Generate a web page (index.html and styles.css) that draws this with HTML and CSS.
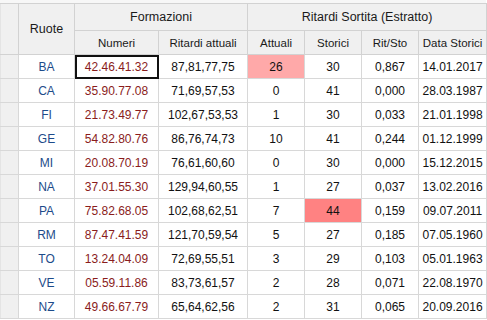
FILE: index.html
```html
<!DOCTYPE html>
<html lang="it">
<head>
<meta charset="utf-8">
<title>Ritardi</title>
<link rel="stylesheet" href="styles.css">
</head>
<body>
<div class="wrap">
  <table class="grid">
    <colgroup>
      <col class="c-rh"><col class="c-ruote"><col class="c-num"><col class="c-rit">
      <col class="c-att"><col class="c-sto"><col class="c-rs"><col class="c-data">
    </colgroup>
    <thead>
      <tr class="h1">
        <th class="rh" rowspan="2"></th>
        <th rowspan="2" class="big">Ruote</th>
        <th colspan="2" class="big">Formazioni</th>
        <th colspan="4" class="big grp">Ritardi Sortita (Estratto)</th>
      </tr>
      <tr class="h2">
        <th>Numeri</th>
        <th>Ritardi attuali</th>
        <th class="grp">Attuali</th>
        <th>Storici</th>
        <th>Rit/Sto</th>
        <th>Data Storici</th>
      </tr>
    </thead>
    <tbody>
      <tr><td class="rh"></td><td class="ruota">BA</td><td class="num sel">42.46.41.32</td><td>87,81,77,75</td><td class="grp hl1">26</td><td>30</td><td>0,867</td><td>14.01.2017</td></tr>
      <tr><td class="rh"></td><td class="ruota">CA</td><td class="num">35.90.77.08</td><td>71,69,57,53</td><td class="grp">0</td><td>41</td><td>0,000</td><td>28.03.1987</td></tr>
      <tr><td class="rh"></td><td class="ruota">FI</td><td class="num">21.73.49.77</td><td>102,67,53,53</td><td class="grp">1</td><td>30</td><td>0,033</td><td>21.01.1998</td></tr>
      <tr><td class="rh"></td><td class="ruota">GE</td><td class="num">54.82.80.76</td><td>86,76,74,73</td><td class="grp">10</td><td>41</td><td>0,244</td><td>01.12.1999</td></tr>
      <tr><td class="rh"></td><td class="ruota">MI</td><td class="num">20.08.70.19</td><td>76,61,60,60</td><td class="grp">0</td><td>30</td><td>0,000</td><td>15.12.2015</td></tr>
      <tr><td class="rh"></td><td class="ruota">NA</td><td class="num">37.01.55.30</td><td>129,94,60,55</td><td class="grp">1</td><td>27</td><td>0,037</td><td>13.02.2016</td></tr>
      <tr><td class="rh"></td><td class="ruota">PA</td><td class="num">75.82.68.05</td><td>102,68,62,51</td><td class="grp">7</td><td class="hl2">44</td><td>0,159</td><td>09.07.2011</td></tr>
      <tr><td class="rh"></td><td class="ruota">RM</td><td class="num">87.47.41.59</td><td>121,70,59,54</td><td class="grp">5</td><td>27</td><td>0,185</td><td>07.05.1960</td></tr>
      <tr><td class="rh"></td><td class="ruota">TO</td><td class="num">13.24.04.09</td><td>72,69,55,51</td><td class="grp">3</td><td>29</td><td>0,103</td><td>05.01.1963</td></tr>
      <tr><td class="rh"></td><td class="ruota">VE</td><td class="num">05.59.11.86</td><td>83,73,61,57</td><td class="grp">2</td><td>28</td><td>0,071</td><td>22.08.1970</td></tr>
      <tr><td class="rh"></td><td class="ruota">NZ</td><td class="num">49.66.67.79</td><td>65,64,62,56</td><td class="grp">2</td><td>31</td><td>0,065</td><td>20.09.2016</td></tr>
    </tbody>
  </table>
</div>
</body>
</html>
```
FILE: styles.css
```css
html, body {
  margin: 0;
  padding: 0;
  background: #ffffff;
}
body {
  font-family: "Liberation Sans", Arial, sans-serif;
  font-size: 12px;
  color: #111111;
}
.wrap {
  width: 486px;
  padding-top: 3px;
  background: #f7f7f7;
}
.grid {
  border-collapse: collapse;
  table-layout: fixed;
  width: 486px;
  background: #ffffff;
}
.c-rh { width: 18px; }
.c-ruote { width: 56px; }
.c-num { width: 84px; }
.c-rit { width: 89px; }
.c-att { width: 57px; }
.c-sto { width: 57px; }
.c-rs { width: 57px; }
.c-data { width: 68px; }

.grid th, .grid td {
  border: 1px solid #d8d8d8;
  padding: 0;
  text-align: center;
  white-space: nowrap;
  overflow: hidden;
}
.grid th {
  background: #f0f0f0;
  font-weight: normal;
  color: #1a1a1a;
  font-size: 11.5px;
  border-color: #d2d2d2;
}
.grid th.big {
  font-size: 12.5px;
}
.h1 { height: 27px; }
.h2 { height: 24px; }
.grid tbody tr { height: 24px; }
.grid .rh {
  background: #f0f0f0;
  border-left-color: #e4e4e4;
}
.grid .grp {
  border-left-color: #b4b4b4;
}
.ruota {
  color: #1d4b8a;
}
.num {
  color: #8a1c1c;
}
.grid td.sel {
  outline: 2px solid #111111;
  outline-offset: -2px;
}
.hl1 {
  background: #ffa9a9;
}
.hl2 {
  background: #ff8282;
}
```
